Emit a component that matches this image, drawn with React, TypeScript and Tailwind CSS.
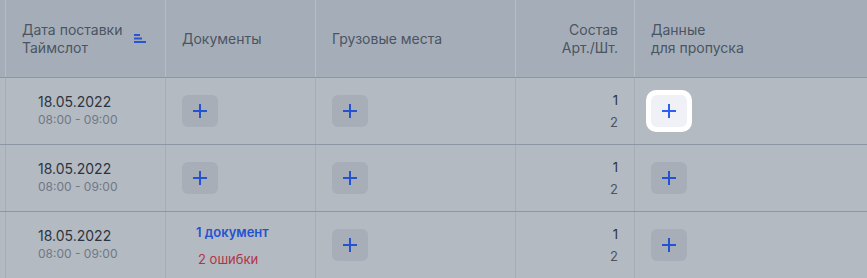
import React from 'react';

type Row = {
  date: string;
  time: string;
  docs?: { count: string; errors: string };
  art: string;
  qty: string;
  highlight?: boolean;
};

const rows: Row[] = [
  { date: '18.05.2022', time: '08:00 - 09:00', art: '1', qty: '2', highlight: true },
  { date: '18.05.2022', time: '08:00 - 09:00', art: '1', qty: '2' },
  {
    date: '18.05.2022',
    time: '08:00 - 09:00',
    docs: { count: '1 документ', errors: '2 ошибки' },
    art: '1',
    qty: '2',
  },
];

const PlusIcon: React.FC<{ className?: string }> = ({ className }) => (
  <svg width="16" height="16" viewBox="0 0 16 16" fill="none" className={className}>
    <path d="M8 1v14M1 8h14" stroke="currentColor" strokeWidth="2" />
  </svg>
);

const AddButton: React.FC<{ highlight?: boolean }> = ({ highlight }) => {
  if (highlight) {
    return (
      <div className="rounded-[10px] bg-white p-[5px] -m-[5px]">
        <button className="flex h-8 w-9 items-center justify-center rounded-md bg-[#eff1f6] text-[#2e5ff0]">
          <PlusIcon />
        </button>
      </div>
    );
  }
  return (
    <button className="flex h-8 w-9 items-center justify-center rounded-md bg-[#a7aeb8] text-[#2452d0]">
      <PlusIcon />
    </button>
  );
};

const SortIcon = () => (
  <svg width="13" height="9" viewBox="0 0 13 9" className="text-[#2a54d0]">
    <rect x="0" y="0" width="6" height="2" fill="currentColor" />
    <rect x="0" y="3.5" width="8" height="2" fill="currentColor" />
    <rect x="0" y="7" width="12" height="2" fill="currentColor" />
  </svg>
);

const grid = 'grid grid-cols-[5px_160px_150px_200px_119px_1fr]';
const headCell = 'flex h-full items-center border-l border-[#b6bcc4] px-4';
const bodyCell = 'flex h-full items-center border-l border-[#a6adb6]';

export default function App() {
  return (
    <div
      className="h-[278px] w-[867px] overflow-hidden bg-[#b4bac2]"
      style={{ fontFamily: 'Inter, "Noto Sans", sans-serif' }}
    >
      <div className={`${grid} h-[78px] border-b border-[#8c97a3] bg-[#a5aeb8] text-[14px] leading-[18px] text-[#4b5462]`}>
        <div />
        <div className={`${headCell} justify-between pr-[18px]`}>
          <span>
            Дата поставки
            <br />
            Таймслот
          </span>
          <SortIcon />
        </div>
        <div className={headCell}>Документы</div>
        <div className={headCell}>Грузовые места</div>
        <div className={`${headCell} justify-end text-right`}>
          <span>
            Состав
            <br />
            Арт./Шт.
          </span>
        </div>
        <div className={headCell}>
          <span>
            Данные
            <br />
            для пропуска
          </span>
        </div>
      </div>

      {rows.map((row, i) => (
        <div key={i} className={`${grid} h-[67px] border-b border-[#8c97a3]`}>
          <div />
          <div className={`${bodyCell} pl-8`}>
            <div className="flex flex-col">
              <span className="text-[14px] leading-[18px] text-[#2d3440]">{row.date}</span>
              <span className="text-[12px] leading-[18px] text-[#6f7884]">{row.time}</span>
            </div>
          </div>
          <div className={`${bodyCell} ${row.docs ? 'pl-[30px]' : 'pl-4'}`}>
            {row.docs ? (
              <div className="flex flex-col gap-[9px]">
                <span className="text-[13px] font-semibold leading-[18px] text-[#2453d0]">{row.docs.count}</span>
                <span className="pl-[2px] text-[13px] leading-[18px] text-[#b03545]">{row.docs.errors}</span>
              </div>
            ) : (
              <AddButton />
            )}
          </div>
          <div className={`${bodyCell} pl-4`}>
            <AddButton />
          </div>
          <div className={`${bodyCell} justify-end pr-4`}>
            <div className="flex flex-col items-end gap-1 text-[13px] leading-[18px]">
              <span className="text-[#2d3440]">{row.art}</span>
              <span className="text-[#4b5462]">{row.qty}</span>
            </div>
          </div>
          <div className={`${bodyCell} pl-4`}>
            <AddButton highlight={row.highlight} />
          </div>
        </div>
      ))}
    </div>
  );
}
